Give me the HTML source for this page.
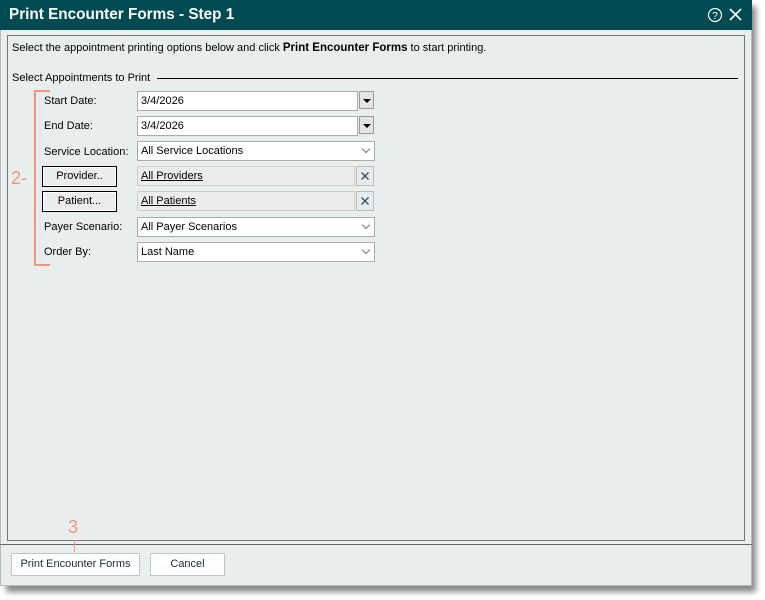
<!DOCTYPE html>
<html><head><style>
*{box-sizing:border-box;margin:0;padding:0}
body{width:765px;height:600px;background:#fff;font-family:"Liberation Sans",sans-serif;font-size:11px;color:#000;position:relative;overflow:hidden}
.shadow{position:absolute;left:6px;top:6px;width:750px;height:586px;background:#888;filter:blur(3px)}
.win{position:absolute;left:0;top:0;width:752px;height:586px;background:#e8eeee;box-shadow:inset 0 0 0 1px #b0c0c0}
.title{position:absolute;left:0;top:0;width:752px;height:30px;background:#004a54;color:#fff;font-weight:bold;font-size:15.3px;line-height:30px;padding-left:9px}
.panel{position:absolute;left:7px;top:35px;width:738px;height:506px;border:1px solid #777;background:#e8eeee}
.abs{position:absolute}
.field{position:absolute;background:#fff;border:1px solid #aaa;height:20px;line-height:18px;padding-left:3px}
.lab{position:absolute;left:44px}
.ddb{position:absolute;width:15px;height:18px;background:#e4e4e4;border:1px solid #999}
.ddb:after{content:"";position:absolute;left:3px;top:7px;border-left:4px solid transparent;border-right:4px solid transparent;border-top:4px solid #000}
.chev{position:absolute;right:5px;top:4px;width:6px;height:6px;border-right:1px solid #777;border-bottom:1px solid #777;transform:rotate(45deg)}
.btn{position:absolute;left:42px;width:75px;height:21px;border:1px solid #000;background:#ececec;text-align:center;line-height:19px;box-shadow:inset 0 0 0 1px #fff}
.lnk{position:absolute;left:137px;width:218px;height:20px;background:#ececec;border:1px solid #ccc;line-height:18px;padding-left:3px;text-decoration:underline}
.x{position:absolute;left:356px;width:18px;height:20px;background:#e6ecee;border:1px solid #bbb}
.fb{position:absolute;top:553px;height:23px;background:#fff;border:1px solid #b9c9c9;text-align:center;line-height:21px;color:#1a2a3a}
</style></head><body>
<div class="shadow"></div>
<div class="win">
<div class="title">Print Encounter Forms - Step 1</div>
<svg class="abs" style="left:707px;top:7px" width="16" height="16" viewBox="0 0 16 16"><circle cx="8" cy="8" r="6.5" fill="none" stroke="#fff" stroke-width="1.2"/><text x="8" y="11.8" fill="#fff" font-size="10" text-anchor="middle" font-family="Liberation Sans">?</text></svg>
<svg class="abs" style="left:729px;top:8px" width="13" height="13" viewBox="0 0 13 13"><path d="M1 1L12 12M12 1L1 12" stroke="#fff" stroke-width="1.6"/></svg>
<div class="panel"></div>
<div class="abs" style="left:12px;top:42px">Select the appointment printing options below and click <b style="font-size:11.5px">Print Encounter Forms</b> to start printing.</div>
<div class="abs" style="left:12px;top:72px">Select Appointments to Print</div>
<div class="abs" style="left:157px;top:78px;width:581px;height:1px;background:#000"></div>

<div class="abs" style="left:34px;top:90px;width:16px;height:176px;border:2px solid #f59477;border-right:none"></div>
<div class="abs" style="left:11px;top:168px;color:#f59477;font-size:18px">2-</div>

<div class="lab" style="top:95px">Start Date:</div>
<div class="field" style="left:137px;top:91px;width:221px">3/4/2026</div><div class="ddb" style="left:359px;top:91px"></div>
<div class="lab" style="top:120px">End Date:</div>
<div class="field" style="left:137px;top:116px;width:221px">3/4/2026</div><div class="ddb" style="left:359px;top:116px"></div>
<div class="lab" style="top:146px">Service Location:</div>
<div class="field" style="left:137px;top:141px;width:238px">All Service Locations<span class="chev"></span></div>
<div class="btn" style="top:166px">Provider..</div>
<div class="lnk" style="top:166px">All Providers</div><div class="x" style="top:166px"><svg width="16" height="18"><path d="M4.5 5.5L11.5 12.5M11.5 5.5L4.5 12.5" stroke="#3a4a60" stroke-width="1.3"/></svg></div>
<div class="btn" style="top:191px">Patient...</div>
<div class="lnk" style="top:191px">All Patients</div><div class="x" style="top:191px"><svg width="16" height="18"><path d="M4.5 5.5L11.5 12.5M11.5 5.5L4.5 12.5" stroke="#3a4a60" stroke-width="1.3"/></svg></div>
<div class="lab" style="top:221px">Payer Scenario:</div>
<div class="field" style="left:137px;top:217px;width:238px">All Payer Scenarios<span class="chev"></span></div>
<div class="lab" style="top:246px">Order By:</div>
<div class="field" style="left:137px;top:242px;width:238px">Last Name<span class="chev"></span></div>

<div class="abs" style="left:0;top:544px;width:752px;height:1px;background:#666"></div>
<div class="abs" style="left:68px;top:517px;color:#f59477;font-size:18px">3</div>
<div class="abs" style="left:74px;top:540px;width:1px;height:12px;background:#f59477"></div>
<div class="fb" style="left:11px;width:129px">Print Encounter Forms</div>
<div class="fb" style="left:150px;width:75px">Cancel</div>
</div>
</body></html>
